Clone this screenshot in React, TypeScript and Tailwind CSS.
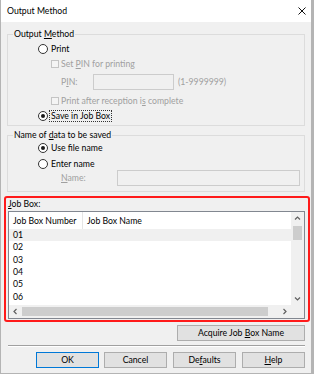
import React from 'react';

const FONT = "font-['Lato','Liberation_Sans',sans-serif] text-[8.7px] leading-[12px]";

const Radio: React.FC<{ checked?: boolean }> = ({ checked }) => (
  <span className="flex h-[10px] w-[10px] shrink-0 items-center justify-center rounded-full border border-[#333333] bg-white">
    {checked && <span className="h-[4px] w-[4px] rounded-full bg-[#1a1a1a]" />}
  </span>
);

const DisabledCheck: React.FC = () => (
  <span className="h-[8px] w-[8px] shrink-0 border border-[#c4c4c4] bg-[#f4f4f4]" />
);

const Chevron: React.FC<{ dir: 'up' | 'down' | 'left' | 'right' }> = ({ dir }) => {
  const points = {
    up: '1,4.5 3.5,2 6,4.5',
    down: '1,2.5 3.5,5 6,2.5',
    left: '4.5,1 2,3.5 4.5,6',
    right: '2.5,1 5,3.5 2.5,6',
  }[dir];
  return (
    <svg width="7" height="7" viewBox="0 0 7 7">
      <polyline points={points} fill="none" stroke="#606060" strokeWidth="1.2" />
    </svg>
  );
};

const Button: React.FC<{ children: React.ReactNode; className?: string; primary?: boolean }> = ({ children, className = '', primary }) => (
  <div
    className={`flex h-[16px] items-center justify-center bg-[#e1e1e1] border ${primary ? 'border-[#0078d7]' : 'border-[#adadad]'} ${className}`}
  >
    <span>{children}</span>
  </div>
);

const rows = ['01', '02', '03', '04', '05', '06', '07'];

export default function App() {
  return (
    <div className={`flex h-[374px] w-[314px] flex-col border-b border-l border-r-[3px] border-[#b4b4b4] bg-[#f0f0f0] text-black ${FONT}`}>
      {/* title bar */}
      <div className="flex h-[22px] shrink-0 items-center justify-between bg-white pl-[6px] pr-[5px]">
        <span>Output Method</span>
        <svg width="8" height="8" viewBox="0 0 8 8">
          <path d="M0.5 0.5 L7.5 7.5 M7.5 0.5 L0.5 7.5" stroke="#111" strokeWidth="1" />
        </svg>
      </div>

      <div className="flex flex-col pl-[6px] pr-[6px]">
        {/* Output Method group */}
        <fieldset className="mt-[6px] border border-[#dcdcdc] pb-[3px]">
          <legend className="ml-[5px] px-[1px]">
            Output <u>M</u>ethod
          </legend>
          <div className="mt-[3px] flex h-[12px] items-center pl-[30px]">
            <Radio />
            <span className="ml-[2px] px-[1px]">Print</span>
          </div>
          <div className="mt-[3px] flex h-[12px] items-center pl-[43px] text-[#a0a0a0]">
            <DisabledCheck />
            <span className="ml-[2px]">
              Set <u>P</u>IN for printing
            </span>
          </div>
          <div className="mt-[4px] flex h-[16px] items-center pl-[53px] text-[#a0a0a0]">
            <span className="w-[32px]">
              P<u>I</u>N:
            </span>
            <span className="h-[16px] w-[81px] border border-[#cccccc] bg-[#f0f0f0]" />
            <span className="ml-[4px]">(1-9999999)</span>
          </div>
          <div className="mt-[5px] flex h-[12px] items-center pl-[43px] text-[#a0a0a0]">
            <DisabledCheck />
            <span className="ml-[2px]">
              Print after reception i<u>s</u> complete
            </span>
          </div>
          <div className="mt-[3px] flex h-[12px] items-center pl-[30px]">
            <Radio checked />
            <span className="ml-[1px] border border-dotted border-[#333333] px-[1px] leading-[10px]">Save in Job Box</span>
          </div>
        </fieldset>

        {/* Name of data group */}
        <fieldset className="mt-[3px] border border-[#dcdcdc] pb-[5px]">
          <legend className="ml-[5px] px-[1px]">
            Name of <u>d</u>ata to be saved
          </legend>
          <div className="mt-[1px] flex h-[12px] items-center pl-[30px]">
            <Radio checked />
            <span className="ml-[2px] px-[1px]">Use file name</span>
          </div>
          <div className="mt-[4px] flex h-[12px] items-center pl-[30px]">
            <Radio />
            <span className="ml-[2px] px-[1px]">Enter name</span>
          </div>
          <div className="flex h-[16px] items-center pl-[53px] text-[#a0a0a0]">
            <span className="w-[56px]">
              <u>N</u>ame:
            </span>
            <span className="h-[16px] w-[183px] border border-[#cccccc] bg-[#f0f0f0]" />
          </div>
        </fieldset>

        {/* Job Box (highlighted) */}
        <div className="-ml-[3px] -mr-[5px] mt-[4px] flex flex-col rounded-[3px] border-2 border-[#ff1a1a] pb-[1px] pl-[2px] pr-[3px]">
          <div className="h-[12px]">
            <u>J</u>ob Box:
          </div>
          <div className="mt-[1px] flex h-[108px] flex-col border border-[#828790] bg-white">
            <div className="flex h-[93px]">
              <div className="flex-1 overflow-hidden">
                <div className="flex h-[17px] items-center">
                  <div className="flex h-full w-[74px] items-center border-r border-[#e5e5e5] pl-[4px]">Job Box Number</div>
                  <div className="pl-[4px]">Job Box Name</div>
                </div>
                {rows.map((r, i) => (
                  <div
                    key={r}
                    className={`flex h-[12.3px] items-center pl-[4px] ${i === 0 ? 'bg-[#f0f0f0]' : ''}`}
                  >
                    {r}
                  </div>
                ))}
              </div>
              <div className="flex w-[13px] flex-col items-center bg-[#f0f0f0]">
                <div className="flex h-[13px] items-center justify-center">
                  <Chevron dir="up" />
                </div>
                <div className="mt-[1px] h-[14px] w-[9px] bg-[#cdcdcd]" />
                <div className="flex-1" />
                <div className="flex h-[13px] items-center justify-center">
                  <Chevron dir="down" />
                </div>
              </div>
            </div>
            <div className="flex h-[13px] bg-[#f0f0f0]">
              <div className="flex w-[13px] items-center justify-center">
                <Chevron dir="left" />
              </div>
              <div className="my-[2px] w-[246px] bg-[#cdcdcd]" />
              <div className="flex-1" />
              <div className="flex w-[13px] items-center justify-center">
                <Chevron dir="right" />
              </div>
              <div className="w-[13px]" />
            </div>
          </div>
        </div>

        <Button className="mt-[3px] h-[15px] w-[128px] self-end">
          Acquire Job <u>B</u>ox Name
        </Button>

        <div className="ml-[1px] mt-[4px] h-[2px] border-b border-t border-b-white border-t-[#a0a0a0]" />

        <div className="mt-[5px] flex">
          <Button primary className="ml-[29px] w-[63px]">
            OK
          </Button>
          <Button className="ml-[5px] w-[63px]">Cancel</Button>
          <Button className="ml-[6px] w-[63px]">
            De<u>f</u>aults
          </Button>
          <Button className="ml-[6px] w-[63px]">
            <u>H</u>elp
          </Button>
        </div>
      </div>
    </div>
  );
}
